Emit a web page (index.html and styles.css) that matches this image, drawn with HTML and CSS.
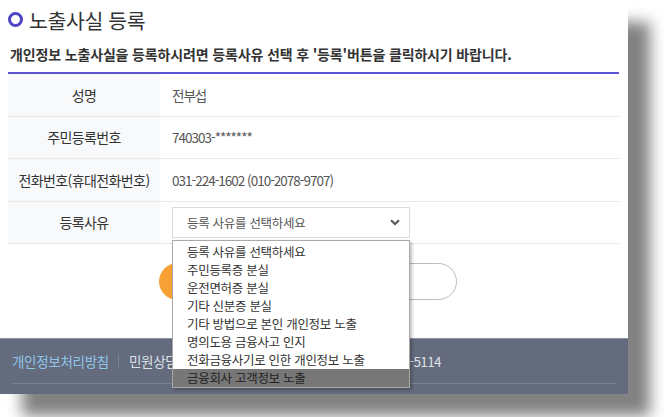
FILE: index.html
```html
<!DOCTYPE html>
<html lang="ko">
<head>
<meta charset="utf-8">
<link rel="stylesheet" href="styles.css">
</head>
<body>
<div class="page">
<div class="card">
  <div class="content">
    <h1 class="title"><span class="ring"></span>노출사실 등록</h1>
    <p class="notice">개인정보 노출사실을 등록하시려면 등록사유 선택 후 '등록'버튼을 클릭하시기 바랍니다.</p>
    <div class="table">
      <div class="row"><div class="th">성명</div><div class="td">전부섭</div></div>
      <div class="row"><div class="th">주민등록번호</div><div class="td">740303-*******</div></div>
      <div class="row"><div class="th">전화번호(휴대전화번호)</div><div class="td">031-224-1602 (010-2078-9707)</div></div>
      <div class="row"><div class="th">등록사유</div><div class="td">
        <div class="select"><span>등록 사유를 선택하세요</span>
          <svg class="chev" width="10" height="7" viewBox="0 0 10 7"><path d="M1 1.2 L5 5 L9 1.2" fill="none" stroke="#555" stroke-width="2"/></svg>
        </div>
      </div></div>
    </div>
    <div class="buttons">
      <button class="btn primary">등록</button>
      <button class="btn outline">취소</button>
    </div>
  </div>
  <footer class="footer">
    <div class="links"><a class="policy">개인정보처리방침</a><span class="sep"></span><span class="contact">민원상담</span><span class="phone">평일 09:00~18:00 (국번없이) 02-2100-5114</span></div>
  </footer>
  <ul class="dropdown">
    <li>등록 사유를 선택하세요</li>
    <li>주민등록증 분실</li>
    <li>운전면허증 분실</li>
    <li>기타 신분증 분실</li>
    <li>기타 방법으로 본인 개인정보 노출</li>
    <li>명의도용 금융사고 인지</li>
    <li>전화금융사기로 인한 개인정보 노출</li>
    <li class="active">금융회사 고객정보 노출</li>
  </ul>
</div>
</div>
</body>
</html>
```

FILE: styles.css
```css
* { box-sizing: border-box; }
html, body { margin: 0; padding: 0; background: #fff; }
body {
  font-family: "Noto Sans CJK KR", "Noto Sans", sans-serif;
  color: #333;
}
.page {
  width: 664px;
  height: 417px;
  overflow: hidden;
}
.card {
  position: relative;
  width: 628px;
  height: 394px;
  background: #fff;
  box-shadow: 22px 22px 14px #828282;
  display: flex;
  flex-direction: column;
}
.content {
  flex: 1;
  padding: 0 9px 0 8px;
}
.title {
  margin: 0;
  height: 38px;
  display: flex;
  align-items: center;
  padding-top: 1px;
  font-size: 20.5px;
  font-weight: 400;
  color: #333;
  letter-spacing: -0.4px;
}
.ring {
  width: 15px;
  height: 15px;
  border: 3px solid #4f44c6;
  border-radius: 50%;
  margin-right: 6px;
}
.notice {
  margin: 0;
  padding: 6px 0 0 2px;
  height: 36px;
  font-size: 14px;
  font-weight: 700;
  color: #333;
  letter-spacing: -0.15px;
  border-bottom: 2px solid #5b55d6;
}
.row {
  display: flex;
  height: 42.5px;
  border-bottom: 1px solid #e8e8e8;
}
.th {
  width: 152px;
  background: #f8f9fa;
  display: flex;
  align-items: center;
  justify-content: center;
  font-size: 14px;
  color: #333;
  letter-spacing: -0.6px;
}
.td {
  flex: 1;
  display: flex;
  align-items: center;
  padding-left: 12px;
  font-size: 13.5px;
  color: #555;
  letter-spacing: -1px;
}
.select {
  width: 238px;
  height: 31px;
  border: 1px solid #dcdcdc;
  display: flex;
  align-items: center;
  justify-content: space-between;
  padding: 0 9px 0 14px;
  font-size: 12.5px;
  color: #555;
  letter-spacing: -0.3px;
}
.buttons {
  display: flex;
  justify-content: center;
  gap: 18px;
  padding-top: 19px;
  padding-right: 12px;
}
.btn {
  width: 140px;
  height: 37px;
  border-radius: 19px;
  font-family: inherit;
  font-size: 15px;
}
.primary { background: #f7a135; border: none; color: #fff; }
.outline { background: #fff; border: 1px solid #b9bcc4; color: #555; }
.footer {
  height: 56px;
  background: #646b7c;
  border-top: 1px solid #8a91a0;
  padding: 0 11px 0 12px;
}
.links {
  height: 45px;
  display: flex;
  align-items: center;
  border-bottom: 1px solid #7b8292;
  font-size: 13.5px;
  letter-spacing: -0.3px;
}
.policy { color: #8fc6ea; }
.sep {
  width: 1px;
  height: 12px;
  background: #7e8596;
  margin: 0 10px 0 9px;
}
.contact { color: #dde1e8; width: 50px; }
.phone {
  color: #dde1e8;
  width: 262px;
  text-align: right;
  white-space: nowrap;
  overflow: hidden;
  letter-spacing: -0.6px;
}
.dropdown {
  position: absolute;
  left: 172px;
  top: 240px;
  width: 238px;
  margin: 0;
  padding: 2px 0 0;
  list-style: none;
  background: #fff;
  border: 1px solid #a9a9a9;
  box-shadow: 2px 2px 3px rgba(0,0,0,0.25);
  font-size: 12.5px;
  letter-spacing: -0.3px;
  color: #333;
}
.dropdown li {
  height: 18px;
  line-height: 18px;
  padding-left: 14px;
}
.dropdown li.active {
  background: #777;
  color: #222;
}
```
